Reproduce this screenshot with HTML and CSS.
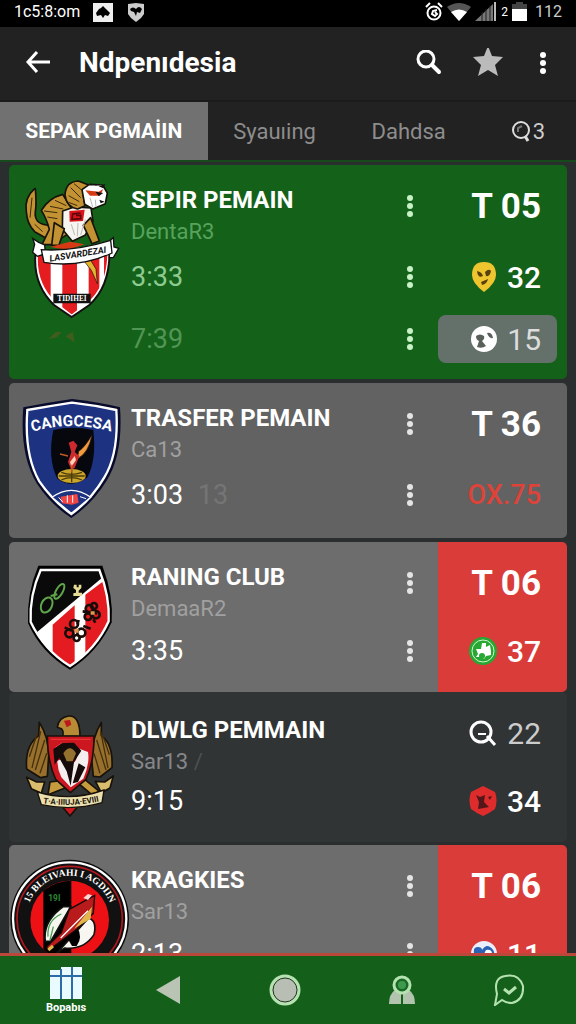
FILE: index.html
```html
<!DOCTYPE html>
<html lang="id">
<head>
    <meta charset="UTF-8">
    <meta name="viewport" content="width=device-width, initial-scale=1.0">
    <title>Ndpenıdesia</title>
    <link rel="stylesheet" href="styles.css">
</head>
<body>
    <svg class="defs" aria-hidden="true">
        <symbol id="dots" viewBox="0 0 8 24">
            <circle cx="4" cy="4" r="3"/><circle cx="4" cy="12" r="3"/><circle cx="4" cy="20" r="3"/>
        </symbol>
    </svg>

    <div class="status">
        <span class="clock">1c5:8:om</span>
        <svg width="20" height="20" viewBox="0 0 20 20"><path fill="#eee" d="M0 1h20v19H0z"/><path d="M3 11l3-4 2-1 2-2 3 3 4 4-2 3-3-1-2 3-2-3-4 1z"/></svg>
        <svg class="shield" width="18" height="20" viewBox="0 0 18 20"><path fill="#ccc" d="M1 2l8-1 8 1v10l-3 4-5 4-5-4-3-4z"/><path d="M3 7q3-3 6 0q3-4 6 0l-2 4-3-1-1 4-2-4-3-1z"/></svg>
        <div class="status-right">
            <svg width="18" height="19" viewBox="0 0 18 19" fill="none" stroke="#fff" stroke-width="2"><circle cx="9" cy="11" r="6.500"/><path d="M1 5l4-4M17 5l-4-4M12 8l-4 1-1 3 3 2 2-2-2-2"/></svg>
            <svg width="24" height="18" viewBox="0 0 24 18"><path fill="#555" d="M0 4Q12-4 24 4L12 18z"/><path fill="#fff" d="M4 9q8-5 16 0l-8 9z"/></svg>
            <svg width="22" height="19" viewBox="0 0 22 19"><path fill="#777" d="M0 19L18 2v17z"/><path stroke="#222" d="M7 10v9M11 7v12M15 4v15"/><path fill="#bbb" d="M19 0h2v19h-2z"/></svg>
            <span class="net">2</span>
            <svg width="15" height="19" viewBox="0 0 15 19"><path fill="#444" d="M4 0h7v2h4v6H0V2h4z"/><path fill="#fff" d="M0 7h15v12H0z"/></svg>
            <span class="battery">112</span>
        </div>
    </div>

    <header>
        <button class="icon-btn" aria-label="Kembali">
            <svg width="26" height="24" viewBox="0 0 26 24" fill="none" stroke="#fff" stroke-width="3"><path d="M25 11H3M12 1L3 11l9 10"/></svg>
        </button>
        <h1>Ndpenıdesia</h1>
        <button class="icon-btn" aria-label="Cari">
            <svg width="26" height="26" viewBox="0 0 26 26" fill="none" stroke="#fff"><circle cx="10" cy="9" r="8" stroke-width="3"/><path stroke-width="4" stroke-linecap="round" d="M16 15l7 7"/></svg>
        </button>
        <button class="icon-btn star" aria-label="Favorit">
            <svg width="30" height="30" viewBox="0 0 30 30"><path fill="#bbb" d="M15 -2l4 10 11 1-8 8 3 11-10-6-10 6 3-11-8-8 11-1z"/></svg>
        </button>
        <button class="icon-btn" aria-label="Menu">
            <svg width="8" height="24" fill="#fff"><use href="#dots"/></svg>
        </button>
    </header>

    <nav class="tabs">
        <button class="valgt">SEPAK PGMAİIN</button>
        <button>Syauıing</button>
        <button>Dahdsa</button>
        <button class="search" aria-label="Cari 3">
            <svg width="20" height="24" viewBox="0 0 20 24" fill="none" stroke="#ddd" stroke-width="2"><circle cx="10" cy="11" r="8"/><path stroke-width="3" d="M14 17l3 5"/><path stroke="#777" d="M11 7l-4 2v4"/></svg>
            <span>3</span>
        </button>
    </nav>

    <main>
        <article class="card green">
            <svg class="crest" width="122" height="190" viewBox="27 12 366 570" aria-hidden="true">
                <g stroke="#16140c" stroke-width="5" stroke-linejoin="round">
                    <path fill="#c39232" d="M104 83q-32 28-25 69 2 37 25 60l32 18 24-30-20-8q-38-4-34-40 4-24 0-69z"/>
                    <path fill="#c39232" d="M124 148q22-37 64-48l28 45-10 72-50 34-30 0 22-46q-8-32-24-57z"/>
                    <path fill="#f7f5ef" d="M188 150l35-12 50 3 6 40-24 42-38 18-30-36z"/>
                    <path fill="#c39232" d="M272 170l26 70-22 8-26-55zM163 185l-8 68 22 0 16-50z"/>
                    <path fill="#c39232" d="M235 60q-38 2-40 42 4 36 38 42l22-10-5-30 22-30z"/>
                    <path fill="#fff" d="M246 86l22-16 40 2 14 24-6 32-38 16-24-14z"/>
                </g>
                <path fill="none" stroke="#3c2a0c" stroke-width="3" d="M132 150l40 5M142 168l30 5M150 136l40 8M165 118l34 16M96 110l-6 60M104 190l24 22M212 80l30 30M206 104l32 18M222 68l24 20M206 124l26 10"/>
                <path fill="none" stroke="#bbb" stroke-width="3" d="M214 190l10 32M234 186l-2 40M256 176l-14 46M270 110l8 28M286 116l2 22"/>
                <path fill="#d53a14" d="M256 88l40 4 14-8-10 20-30 0zM150 258l60-16 44 8-50 16z"/>
                <path fill="#111" d="M286 92l24 4-14 9zM298 116l16 6-12 5zM280 70q16 12 36-2l-6 14z"/>
                <path fill="#d9151b" d="M208 150l46-4-5 34-40 2z"/>
                <path fill="none" stroke="#5c0509" stroke-width="5" d="M242 156l-24 3-2 16 26-2v-10h-14"/>
                <clipPath id="c1"><path d="M110 282q106 20 216-26 4 118-62 172l-49 37-49-37q-62-60-56-146z"/></clipPath>
                <g clip-path="url(#c1)">
                    <path fill="#e51c20" d="M100 250h240v220H100z"/>
                    <path fill="#fff" d="M152 250h35v220h-35zM231 250h35v220h-35z"/>
                    <path fill="#fff" d="M298 250h14v160h-14z"/>
                    <path fill="#e3b52d" stroke="#111" stroke-width="2" d="M244 290l30 38 18 40-4-44-22-36z"/>
                </g>
                <path fill="none" stroke="#fff" stroke-width="8" d="M110 282q-6 86 56 146l49 37 49-37q66-54 62-172"/>
                <path fill="none" stroke="#111" stroke-width="6" d="M106 282q-6 90 56 150l53 36 53-36q66-60 60-176"/>
                <path fill="#111" d="M160 398h112v29H160z"/>
                <path fill="#fff" stroke="#111" stroke-width="4" d="M98 232l6 18-6 24 14 12 24-8-2-26-18-8zM330 238l10-8 2 28 14 4-16 28-12 0z"/>
                <path fill="#fff" stroke="#111" stroke-width="4" d="M124 266q100 6 208-28l4 38q-100 46-204 28z"/>
                <text x="150" y="302" transform="rotate(-9 150 302)" class="sv t-ribbon">LASVARDEZAI</text>
                <text x="216" y="420" class="sv t-plate">TIDIHEI</text>
                <path fill="#6b5a20" d="M145 535l22-22 18 0-14 16zM196 526l22-14 6 32z" opacity=".5"/>
            </svg>
            <div class="info"><h2>SEPIR PEMAIN</h2><p>DentaR3</p></div>
            <button class="more" aria-label="Opsi"><svg width="8" height="24"><use href="#dots"/></svg></button>
            <div class="score big">T 05</div>
            <div class="time">3:33</div>
            <button class="more" aria-label="Opsi"><svg width="8" height="24"><use href="#dots"/></svg></button>
            <div class="score">
                <svg width="26" height="30" viewBox="0 0 26 30"><path fill="#efc52f" d="M13 0q12 0 12 13 0 8-12 17Q1 21 1 13 1 0 13 0z"/><path fill="#56410c" d="M6 9q5 1 6 5-5 3-6-5zM14 10q4-4 6-1-1 6-5 5zM10 20l7-3q-1 5-6 6z"/></svg>
                <span>32</span>
            </div>
            <div class="time faded">7:39</div>
            <button class="more" aria-label="Opsi"><svg width="8" height="24"><use href="#dots"/></svg></button>
            <div class="score pill">
                <svg width="26" height="26" viewBox="0 0 26 26"><circle cx="13" cy="13" r="13" fill="#fff"/><path fill="#596059" d="M5 10q4-3 8 0 1 3-2 5l4 5q-4 3-9 1l2-6q-3-1-3-5zM16 7q5-1 6 5-4 1-6-5z"/></svg>
                <span>15</span>
            </div>
        </article>

        <article class="card gray">
            <svg class="crest" width="122" height="150" viewBox="27 9 366 450" aria-hidden="true">
                <path fill="#080b2b" d="M70 82q70-14 146-25 76 8 144 25 10 140-40 220-44 70-106 112-62-40-104-104Q58 222 70 82z"/>
                <path fill="#1d3382" stroke="#fff" stroke-width="7" d="M82 90q70-12 134-22 70 8 133 22 8 130-36 202-40 68-99 110-56-40-96-98Q72 224 82 90z"/>
                <path fill="#07070e" d="M160 150q56-14 120 0 10 90-18 142-46 36-90 4-30-60-12-146z"/>
                <path id="arc2" fill="none" d="M94 156q122-36 242 0"/>
                <text class="sv t-arch"><textPath href="#arc2" startOffset="50%">CANGCESA</textPath></text>
                <ellipse cx="215" cy="288" rx="42" ry="21" fill="#c9a52c"/>
                <path fill="none" stroke="#4d3b08" stroke-width="4" d="M176 288h78M215 269v38M184 277q30 12 62 0M184 300q30-14 62 0"/>
                <path fill="#f39a3c" stroke="#111" stroke-width="2" d="M276 164q-10 56-44 72l4-22q20-14 40-50z"/>
                <path fill="#cd2a30" d="M206 188l14-6 12 14-8 20 14 12-14 36-10 6-10-24 10-30z"/>
                <path fill="#ffd3b8" d="M210 246l14-18 4 12-14 20z"/>
                <path fill="none" stroke="#c05c20" stroke-width="4" d="M180 222l24 6M216 254l-2 24"/>
                <path fill="#1d3382" stroke="#fff" stroke-width="4" d="M156 352q58-42 116 0l-58 48z"/>
                <path fill="#f04444" d="M182 350l50-8 4 26-20 6-30-4z"/>
                <path stroke="#fff" stroke-width="3" d="M176 352l12 14M240 350l18 6M202 346v22M218 346v22"/>
            </svg>
            <div class="info"><h2>TRASFER PEMAIN</h2><p>Ca13</p></div>
            <button class="more" aria-label="Opsi"><svg width="8" height="24"><use href="#dots"/></svg></button>
            <div class="score big">T 36</div>
            <div class="time">3:03 <span class="ghost">13</span></div>
            <button class="more" aria-label="Opsi"><svg width="8" height="24"><use href="#dots"/></svg></button>
            <div class="score loss">OX.75</div>
        </article>

        <article class="card gray live">
            <svg class="crest" width="122" height="136" viewBox="27 6 366 408" aria-hidden="true">
                <clipPath id="c3"><path d="M122 92h176q30 80 26 150-40 84-114 136-80-48-118-130-4-80 30-156z"/></clipPath>
                <path d="M115 77h192q34 90 28 170-42 90-125 142-88-52-126-140-4-90 31-172z"/>
                <g clip-path="url(#c3)">
                    <path fill="#0a0a0a" d="M80 80h260v310H80z"/>
                    <path fill="#fff" d="M80 302L310 110l30 20v260H80z"/>
                    <path fill="#e41b20" d="M158 254l66-58v184h-66zM256 164l80-60v200l-80 40z"/>
                </g>
                <path fill="none" stroke="#fff" stroke-width="7" d="M122 90h176q32 80 28 154-38 84-116 134-78-48-118-132-4-80 30-156z"/>
                <g fill="none" stroke="#5fa64a" stroke-width="6"><ellipse cx="140" cy="195" rx="16" ry="24" transform="rotate(25 140 195)"/><ellipse cx="178" cy="154" rx="10" ry="25" transform="rotate(30 178 154)"/><path d="M152 168l20-5"/></g>
                <path fill="#e5dd94" d="M222 134h8v8h6v-8h8v10l-8 8v6h10v10h-26v-8l8-2v-8l-8-6z"/>
                <g fill="none" stroke="#1a0c08" stroke-width="8"><circle cx="222" cy="252" r="12"/><circle cx="244" cy="278" r="12"/><circle cx="208" cy="280" r="12"/><circle cx="230" cy="294" r="9"/><circle cx="268" cy="206" r="11"/><circle cx="288" cy="224" r="11"/><circle cx="282" cy="198" r="9"/><circle cx="264" cy="230" r="10"/><path d="M194 262l20 10M250 258l22 8M248 214l44 6M236 240l-4 14M280 238l6 10"/></g>
                <path fill="#e09a50" d="M224 266h12v12h-12zM272 214h12v10h-12z"/>
            </svg>
            <div class="info"><h2>RANING CLUB</h2><p>DemaaR2</p></div>
            <button class="more" aria-label="Opsi"><svg width="8" height="24"><use href="#dots"/></svg></button>
            <div class="score big">T 06</div>
            <div class="time">3:35</div>
            <button class="more" aria-label="Opsi"><svg width="8" height="24"><use href="#dots"/></svg></button>
            <div class="score">
                <svg width="28" height="28" viewBox="0 0 28 28"><circle cx="14" cy="14" r="14" fill="#27a832"/><circle cx="14" cy="14" r="11" fill="none" stroke="#d5f5d0" stroke-width="1"/><path fill="#fff" d="M7 12l5 0 1-6 4 0v4l4-2 1 6v4l-5 1-2 3-4-2-4 0 2-3z"/><circle cx="13" cy="19" r="3" fill="#27a832"/></svg>
                <span>37</span>
            </div>
        </article>

        <article class="card dark">
            <svg class="crest" width="122" height="136" viewBox="27 6 366 408" aria-hidden="true">
                <g stroke="#17120a" stroke-width="5" stroke-linejoin="round">
                    <path fill="#98702c" d="M118 97q28 44 28 100l-4 62-20 4-42-26q-6-70 36-100zM304 97q-26 44-30 100l6 62 20 2 36-28q4-70-32-96z"/>
                    <path fill="#b78a35" d="M188 138q4-14-4-22l-12-4q4-30 34-34 34-2 34 62z"/>
                    <path fill="#c59b3e" d="M150 276l50-6 10 18-66 26zM230 276l24-8 44 36-20 12z"/>
                    <path fill="#d9bc6c" d="M80 262l30 14 24 0-10 34-30-14zM340 258l-26 18-28-2 18 34 26-14z"/>
                    <path fill="#cc1620" d="M142 138h140q0 80-24 130l-47 40-44-40q-24-50-25-130zM170 330h80l-40 48z"/>
                </g>
                <path fill="none" stroke="#433010" stroke-width="4" d="M122 124l-26 110M134 150l-28 90M140 190l-20 60M112 130l-24 70M302 124l22 110M290 150l28 90M282 190l18 60M308 134l20 60"/>
                <path fill="#bb1a19" d="M192 92l18-2 4 14-14 8z"/>
                <path fill="#f4eeee" d="M172 212l24-8 14 30 18-24 10-34 26 10q6 34-14 80l-38 26-28-30q-12-24-12-50z"/>
                <path fill="#160b0b" d="M160 178l22-18 40-2 22 24-22 34-10 72-12-44-22-40-14 20zM236 220l20 12-22 44-16 4z"/>
                <path fill="#94712e" d="M190 190q20-30 38 0l-10 24h-18z"/>
                <path fill="none" stroke="#ef3b3c" stroke-width="3" d="M152 148h120M166 172l20-14"/>
                <path fill="#ecdfae" stroke="#17120a" stroke-width="4" d="M112 306q100 30 200-6l-6 38q-90 26-182 6z"/>
                <path id="arc4" fill="none" d="M120 338q92 16 186-6"/>
                <text class="sv t-motto"><textPath href="#arc4" startOffset="50%">T·A·IIIUJA·EVIII</textPath></text>
            </svg>
            <div class="info"><h2>DLWLG PEMMAIN</h2><p>Sar13 <span class="ghost">/</span></p></div>
            <div class="score thin">
                <svg width="28" height="26" viewBox="0 0 28 26" fill="none" stroke="#fff" stroke-width="3"><circle cx="12" cy="12" r="10"/><path d="M18 16l8 9"/><path stroke-width="2" d="M9 14h8"/></svg>
                <span>22</span>
            </div>
            <div class="time">9:15</div>
            <div class="score">
                <svg width="28" height="30" viewBox="0 0 28 30"><path fill="#de2c2c" d="M14 0l6 3 6 3q3 8 0 17l-6 4-6 3-6-3-6-4q-3-9 0-17l6-3z"/><path fill="#53171a" d="M7 9l4 2 5-2-1 7 5 5-5 1-6 1 1-7zM19 11l4-1-2 4z"/></svg>
                <span>34</span>
            </div>
        </article>

        <article class="card gray live">
            <svg class="crest" width="122" height="136" viewBox="27 15 366 408" aria-hidden="true">
                <circle cx="209" cy="237" r="178" fill="#0b0b0b"/>
                <circle cx="209" cy="237" r="170" fill="#111" stroke="#fff" stroke-width="7"/>
                <circle cx="209" cy="237" r="158" fill="none" stroke="#b01820" stroke-width="5"/>
                <circle cx="209" cy="240" r="118" fill="#ed1115"/>
                <path d="M130 152q38-30 84-30v236q-50 0-84-30z"/>
                <path id="arc5" fill="none" d="M79 237A130 130 0 0 1 339 237"/>
                <text class="sv t-round"><textPath href="#arc5" startOffset="50%">15 BLEIVAHI I AGDIIN</textPath></text>
                <text x="145" y="184" class="sv t-year">19I</text>
                <path fill="#f8f6f1" stroke="#111" stroke-width="5" d="M136 304q-8-60 54-104l22 0-60 104zM170 340l96-106q26 8 16 50-30 46-88 40z"/>
                <path fill="none" stroke="#48a054" stroke-width="4" d="M144 290q-4-48 40-68M150 300l10-40"/>
                <path d="M200 290l30-30q20 30 0 58l-14 0z"/>
                <path fill="#b91a1b" stroke="#180808" stroke-width="4" d="M284 166l-4 54-50 48-86 64-4-12 44-42 24-70z"/>
                <path fill="#e1b64a" d="M276 200l-4 36-50 30zM142 326l14-12 6 8-14 12z"/>
                <path stroke="#fff" stroke-width="4" d="M264 212l-82 82"/>
                <path fill="#ffd8d8" d="M250 174l14-12 12 4-12 14z"/>
            </svg>
            <div class="info"><h2>KRAGKIES</h2><p>Sar13</p></div>
            <button class="more" aria-label="Opsi"><svg width="8" height="24"><use href="#dots"/></svg></button>
            <div class="score big">T 06</div>
            <div class="time">2:13</div>
            <button class="more" aria-label="Opsi"><svg width="8" height="24"><use href="#dots"/></svg></button>
            <div class="score">
                <svg width="26" height="26" viewBox="0 0 26 26"><circle cx="13" cy="13" r="13" fill="#e9eefa"/><path fill="#2c62b5" d="M3 12q-1-6 4-6 4 0 4 3 4-6 8-3 5 3 4 8-4 8-10 6-8 0-10-8z"/><path fill="#fff" d="M15 9q6-1 6 4-1 5-5 4l-3-4z"/></svg>
                <span>11</span>
            </div>
        </article>
    </main>

    <nav class="bottom">
        <button>
            <svg width="34" height="34" viewBox="0 0 34 34"><path fill="#e9fbff" d="M1 4h10v29H1zM12 1h10v32H12zM23 1h10v32H23z"/><path stroke="#2a6ba8" stroke-width="2" d="M1 10h32M12 3v30M23 1v32"/></svg>
            <span>Bopabıs</span>
        </button>
        <button aria-label="Kembali"><svg width="24" height="28" viewBox="0 0 24 28"><path fill="#b9c4b5" d="M24 0v28L0 14z"/></svg></button>
        <button aria-label="Beranda"><svg width="32" height="32" viewBox="0 0 32 32"><circle cx="16" cy="16" r="14" fill="#b9beb5" stroke="#b5e2b0" stroke-width="3"/><circle cx="16" cy="16" r="12" fill="none" stroke="#1d3a1d" stroke-width="1"/></svg></button>
        <button aria-label="Profil"><svg width="28" height="30" viewBox="0 0 28 30"><path fill="#b2c3ae" d="M1 29q0-10 6-14h14q6 4 6 14z"/><path stroke="#14611a" stroke-width="2" d="M14 18v12"/><circle cx="14" cy="10" r="8" fill="#176a24" stroke="#b5e2b0" stroke-width="3"/><circle cx="14" cy="10" r="4" fill="#3f9a4f"/></svg></button>
        <button aria-label="Pesan"><svg width="32" height="32" viewBox="0 0 32 32" fill="none" stroke="#b5e2b0" stroke-width="2"><path d="M4 20Q0 4 12 2q14-3 18 10 1 14-11 17-6 0-10-3l-7 5z"/><path stroke-width="3" d="M11 15l5 4 7-6"/></svg></button>
    </nav>
</body>
</html>
```
FILE: styles.css
```css
* {
    box-sizing: border-box;
}

body {
    margin: 0;
    height: 100vh;
    display: flex;
    flex-direction: column;
    overflow: hidden;
    background-color: #2b2e2f;
    color: white;
    font-family: Roboto, "Liberation Sans", sans-serif;
}

button {
    background: none;
    border: none;
    padding: 0;
    color: inherit;
    font: inherit;
}

svg {
    display: block;
    flex-shrink: 0;
}

h1, h2, p {
    margin: 0;
}

.defs {
    display: none;
}

/*status*/

.status {
    display: flex;
    align-items: center;
    height: 27px;
    padding: 0 14px 4px;
    background-color: black;
    font-size: 16px;
}

.clock {
    margin-right: 13px;
}

.shield {
    margin-left: 14px;
}

.status-right {
    display: flex;
    align-items: center;
    gap: 4px;
    margin-left: auto;
}

.net {
    font-size: 12px;
}

.battery {
    margin-left: 4px;
    color: #ccc;
}

/*header*/

header {
    display: flex;
    align-items: center;
    height: 73px;
    padding: 0 29px 2px 25px;
    background-color: #222;
}

h1 {
    flex: 1;
    margin-left: 28px;
    font-size: 28px;
    font-weight: 700;
}

.star {
    margin: 0 36px 0 31px;
}

/*tabs*/

.tabs {
    display: flex;
    height: 62px;
    border-top: 2px solid #1b1b1b;
    border-bottom: 2px solid #174a1b;
    background-color: #222;
    font-size: 22px;
    color: #8d8d8d;
}

.tabs button {
    flex: 135 1 0;
}

.tabs .valgt {
    flex-grow: 209;
    background-color: #717171;
    color: white;
    font-size: 21px;
    font-weight: 700;
}

.tabs .search {
    display: flex;
    flex-grow: 97;
    align-items: center;
    justify-content: center;
    gap: 2px;
    padding-left: 4px;
    color: #ccc;
}

/*cards*/

main {
    flex: 1;
    min-height: 0;
    overflow: hidden;
    padding: 3px 9px 0;
}

.card {
    display: grid;
    grid-template-columns: 122px 1fr 56px 129px;
    grid-template-rows: 82px 60px;
    padding-bottom: 13px;
    margin-bottom: 4px;
    border-radius: 5px;
    overflow: hidden;
}

.green {
    grid-template-rows: 82px 60px 64px;
    padding-bottom: 8px;
    background-color: #14611a;
}

.gray {
    background-color: #626262;
}

.live, .dark {
    grid-template-rows: 82px 54px;
    padding-bottom: 14px;
}

.live {
    margin-bottom: 0;
    background: linear-gradient(to left, #d93c39 129px, #6d6d6d 129px);
}

.dark {
    margin-bottom: 3px;
    background-color: #313435;
}

.crest {
    grid-row: 1 / -1;
    overflow: visible;
}

.info {
    padding-top: 20px;
}

.dark .info {
    padding-top: 23px;
}

h2 {
    font-size: 24px;
    font-weight: 700;
    line-height: 30px;
    white-space: nowrap;
}

.info p {
    font-size: 22px;
    line-height: 34px;
    color: #a0a0a0;
}

.green p {
    color: #58a35c;
}

.dark p {
    color: #85878a;
}

.time {
    align-self: center;
    font-size: 27px;
}

.green .time {
    color: #8fcb90;
}

.green .faded {
    color: #529554;
}

.ghost {
    margin-left: 8px;
    color: #757575;
}

.dark .ghost {
    margin-left: 0;
    color: #4e5052;
}

.more {
    display: flex;
    align-items: center;
    justify-content: center;
    fill: #e4e4e4;
}

.green .more {
    fill: #c8f2c6;
}

.score {
    grid-column: 4;
    display: flex;
    align-items: center;
    justify-content: flex-end;
    gap: 10px;
    padding-right: 26px;
    font-size: 30px;
    font-weight: 500;
}

.big {
    font-size: 35px;
    font-weight: 700;
}

.thin {
    font-weight: 400;
    color: #ccc;
}

.loss {
    color: #de4339;
    font-size: 27px;
}

.pill {
    align-self: center;
    height: 48px;
    margin-right: 10px;
    padding-right: 16px;
    border-radius: 8px;
    background-color: #64706a;
    color: #ddd;
    font-weight: 400;
}

/*crest lettering*/

.sv {
    font-weight: 700;
    fill: white;
}

.t-ribbon {
    font-size: 27px;
    font-style: italic;
    fill: #111;
}

.t-plate {
    font-family: "Liberation Serif", serif;
    font-size: 22px;
    text-anchor: middle;
}

.t-arch {
    font-size: 46px;
    text-anchor: middle;
}

.t-motto {
    font-size: 24px;
    text-anchor: middle;
    fill: #17120a;
}

.t-round {
    font-family: "Liberation Serif", serif;
    font-size: 29px;
    text-anchor: middle;
}

.t-year {
    font-size: 25px;
    fill: #2c8733;
}

/*bottom*/

.bottom {
    display: grid;
    grid-template-columns: 102fr 102fr 132fr 102fr 112fr;
    height: 71px;
    padding: 0 11px 0 15px;
    border-top: 3px solid #bb473b;
    background-color: #14601b;
}

.bottom button {
    display: flex;
    flex-direction: column;
    align-items: center;
    justify-content: center;
    gap: 2px;
}

.bottom span {
    font-size: 11px;
    font-weight: 700;
    line-height: 12px;
}
```
